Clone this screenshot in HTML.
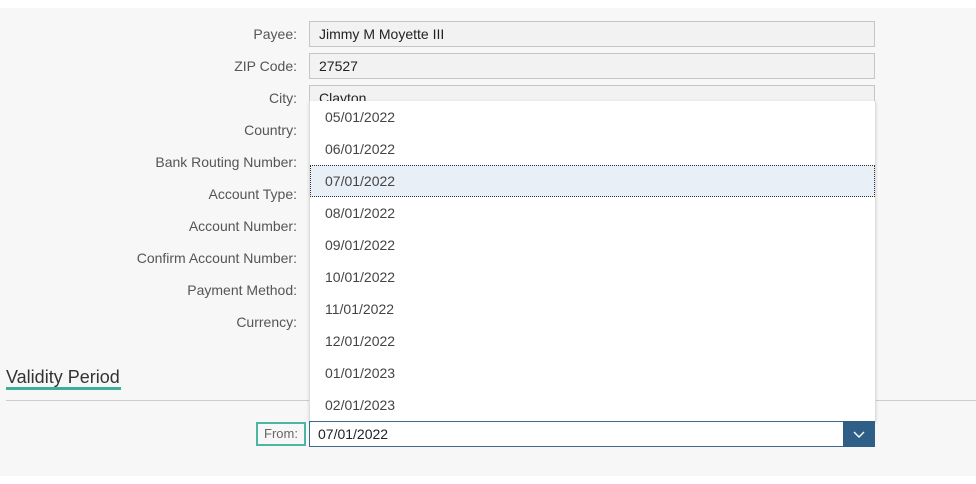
<!DOCTYPE html>
<html><head><style>
body{margin:0;width:976px;height:484px;background:#f7f7f7;font-family:"Liberation Sans",sans-serif;position:relative;overflow:hidden}
.a{position:absolute}
.lbl{position:absolute;right:679px;font-size:14px;color:#555;text-align:right;white-space:nowrap}
.inp{position:absolute;left:309px;border:1px solid #c6c6c6;background:#f2f2f2;font-size:14px;color:#222;line-height:24px;padding-left:9px;box-sizing:border-box;width:566px;height:26px}
.dd{position:absolute;z-index:5;left:309px;top:101px;width:567px;height:321px;background:#fff;border:1px solid #ddd;border-top:none;box-sizing:border-box;box-shadow:0 1px 3px rgba(0,0,0,.15);overflow:hidden}
.it{height:32px;line-height:32px;padding-left:15px;font-size:14px;color:#444;box-sizing:border-box}
.sel{background:#e9eff7;border:1px dotted #333;line-height:30px;padding-left:14px}
</style></head><body>
<div class="a" style="left:0;top:0;width:976px;height:8px;background:#fff"></div>
<div class="a" style="left:0;top:476px;width:976px;height:8px;background:#fff"></div>
<div class="lbl" style="top:26px">Payee:</div>
<div class="lbl" style="top:58px">ZIP Code:</div>
<div class="lbl" style="top:90px">City:</div>
<div class="lbl" style="top:122px">Country:</div>
<div class="lbl" style="top:154px">Bank Routing Number:</div>
<div class="lbl" style="top:186px">Account Type:</div>
<div class="lbl" style="top:218px">Account Number:</div>
<div class="lbl" style="top:250px">Confirm Account Number:</div>
<div class="lbl" style="top:282px">Payment Method:</div>
<div class="lbl" style="top:314px">Currency:</div>
<div class="inp" style="top:21px">Jimmy M Moyette III</div>
<div class="inp" style="top:53px">27527</div>
<div class="inp" style="top:85px">Clayton</div>
<div class="a" style="left:6px;top:400px;width:970px;height:1px;background:#ccc"></div>
<div class="dd">
<div class="it">05/01/2022</div><div class="it">06/01/2022</div><div class="it sel">07/01/2022</div><div class="it">08/01/2022</div><div class="it">09/01/2022</div><div class="it">10/01/2022</div><div class="it">11/01/2022</div><div class="it">12/01/2022</div><div class="it">01/01/2023</div><div class="it">02/01/2023</div>
</div>
<div class="a" style="left:6px;top:367px;font-size:18px;color:#333">Validity Period</div>
<div class="a" style="left:6px;top:387px;width:115px;height:3px;background:#3fae98"></div>
<div class="a" style="left:256px;top:422px;width:50px;height:24px;border:2px solid #4db6a0;box-sizing:border-box;font-size:13px;color:#666;line-height:20px;text-align:center">From:</div>
<div class="a" style="z-index:6;left:309px;top:421px;width:566px;height:26px;border:1px solid #3d6a8c;box-sizing:border-box;background:#fff;font-size:14px;color:#222;line-height:24px;padding-left:8px">07/01/2022</div>
<div class="a" style="z-index:7;left:843px;top:421px;width:32px;height:26px;background:#2f5e86"><svg width="32" height="26"><path d="M11 11l5 5 5-5" stroke="#fff" stroke-width="1.4" fill="none"/></svg></div>
</body></html>
